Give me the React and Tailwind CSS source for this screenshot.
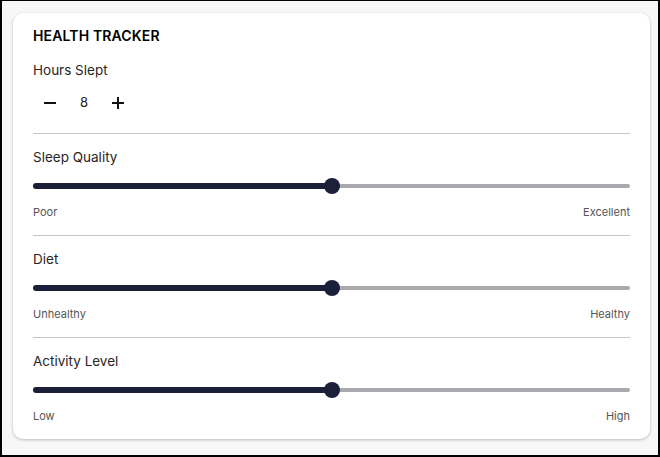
import React from "react";

function Slider({ value, left, right }) {
  return (
    <div className="mt-[11px]">
      <div className="relative h-4 flex items-center">
        <div className="h-[4px] w-full rounded-full bg-[#a9a9ae]" />
        <div
          className="absolute left-0 h-[6px] rounded-full bg-[#1b1f38]"
          style={{ width: `${value}%` }}
        />
        <div
          className="absolute w-4 h-4 rounded-full bg-[#1b1f38] -translate-x-1/2"
          style={{ left: `${value}%` }}
        />
      </div>
      <div className="mt-[10px] flex justify-between text-[11px] leading-4 text-[#555]">
        <span>{left}</span>
        <span>{right}</span>
      </div>
    </div>
  );
}

function Section({ label, left, right, last }) {
  return (
    <div className={last ? "" : "border-b border-[#c6c6c6] pb-[15px]"}>
      <div className="mt-[13px] text-[13.5px] leading-5 text-[#2a2424]">{label}</div>
      <Slider value={50} left={left} right={right} />
    </div>
  );
}

export default function App() {
  return (
    <div
      className="w-[660px] h-[457px] bg-[#f7f7f7] border-black border-t border-x-2 border-b-2 pl-[11px] pt-[12px]"
      style={{ fontFamily: "Inter, 'Liberation Sans', sans-serif" }}
    >
      <div className="w-[637px] h-[426px] bg-white rounded-[10px] shadow-[0_1px_3px_rgba(0,0,0,0.25)] px-5 pt-[13px]">
        <div className="text-[14px] leading-5 font-semibold text-black tracking-[0.01em]">
          HEALTH TRACKER
        </div>
        <div className="mt-[14px] text-[13.5px] leading-5 text-[#2a2424]">Hours Slept</div>
        <div className="mt-[11px] h-6 flex items-center">
          <button className="w-[24px] h-6 ml-[5px] flex items-center justify-center">
            <svg width="12" height="12" viewBox="0 0 12 12">
              <path d="M0 6h12" stroke="#111" strokeWidth="2" />
            </svg>
          </button>
          <span className="w-[44px] text-center text-[13px] text-[#222]">8</span>
          <button className="w-[24px] h-6 flex items-center justify-center">
            <svg width="12" height="12" viewBox="0 0 12 12">
              <path d="M0 6h12M6 0v12" stroke="#111" strokeWidth="2" />
            </svg>
          </button>
        </div>
        <div className="mt-[18px] border-b border-[#c6c6c6]" />
        <Section label="Sleep Quality" left="Poor" right="Excellent" />
        <Section label="Diet" left="Unhealthy" right="Healthy" />
        <Section label="Activity Level" left="Low" right="High" last />
      </div>
    </div>
  );
}
